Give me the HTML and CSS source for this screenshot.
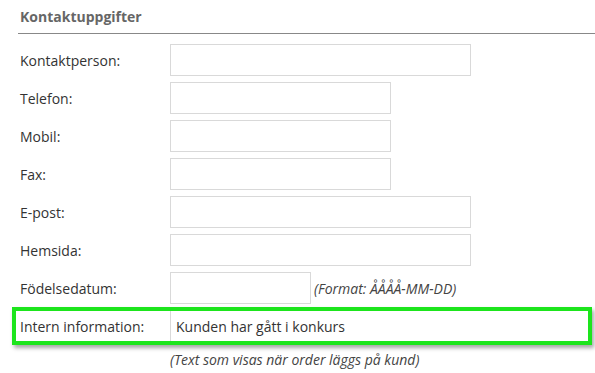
FILE: index.html
```html
<!DOCTYPE html>
<html lang="sv">
<head>
  <meta charset="UTF-8" />
  <meta name="viewport" content="width=device-width, initial-scale=1.0"/>
  <title>Kontaktuppgifter</title>
  <link rel="stylesheet" href="styles.css">
</head>
<body>
  <div class="section">
    <h2 class="section-title">Kontaktuppgifter</h2>

    <form class="contact-form">
      <div class="row">
        <label for="contact">Kontaktperson:</label>
        <input type="text" id="contact" class="wide">
      </div>
      <div class="row">
        <label for="phone">Telefon:</label>
        <input type="text" id="phone" class="medium">
      </div>
      <div class="row">
        <label for="mobile">Mobil:</label>
        <input type="text" id="mobile" class="medium">
      </div>
      <div class="row">
        <label for="fax">Fax:</label>
        <input type="text" id="fax" class="medium">
      </div>
      <div class="row">
        <label for="email">E-post:</label>
        <input type="text" id="email" class="wide">
      </div>
      <div class="row">
        <label for="web">Hemsida:</label>
        <input type="text" id="web" class="wide">
      </div>
      <div class="row">
        <label for="birth">Födelsedatum:</label>
        <input type="text" id="birth" class="short">
        <span class="hint">(Format: ÅÅÅÅ-MM-DD)</span>
      </div>
      <div class="row highlight">
        <label for="internal">Intern information:</label>
        <input type="text" id="internal" class="fill" value="Kunden har gått i konkurs">
      </div>
      <div class="row-note">
        <span class="hint">(Text som visas när order läggs på kund)</span>
      </div>
    </form>
  </div>
</body>
</html>
```

FILE: styles.css
```css
body {
  margin: 0;
  font-family: "Open Sans", "DejaVu Sans", sans-serif;
  font-size: 14px;
  color: #333;
  background: #fff;
}

.section {
  padding-left: 18px;
}

.section-title {
  margin: 0;
  padding: 7px 0 6px 2px;
  font-size: 14px;
  font-weight: bold;
  line-height: 20px;
  color: #666;
  border-bottom: 1px solid #888;
}

.contact-form {
  padding: 10px 3px 0 2px;
  display: flex;
  flex-direction: column;
  gap: 6px;
}

.row {
  display: flex;
  align-items: center;
  height: 32px;
}

.row label {
  width: 150px;
  flex-shrink: 0;
}

.row input {
  box-sizing: border-box;
  height: 32px;
  margin: 0;
  padding: 0 5px;
  border: 1px solid #d9d9d9;
  font-family: inherit;
  font-size: 14px;
  color: #333;
  background: #fff;
  outline: none;
}

.row .wide {
  width: 301px;
}

.row .medium {
  width: 221px;
}

.row .short {
  width: 141px;
}

.row .fill {
  flex: 1;
}

.hint {
  font-style: italic;
  color: #444;
}

.row .hint {
  margin-left: 3px;
}

.highlight {
  position: relative;
}

.highlight::after {
  content: "";
  position: absolute;
  top: -3px;
  bottom: -3px;
  left: -8px;
  right: 0;
  border: 4px solid #1de51d;
  box-shadow: 2px 3px 4px rgba(0, 0, 0, 0.35);
  pointer-events: none;
}

.row-note {
  padding-left: 150px;
  margin-top: 2px;
  line-height: 20px;
}
```
